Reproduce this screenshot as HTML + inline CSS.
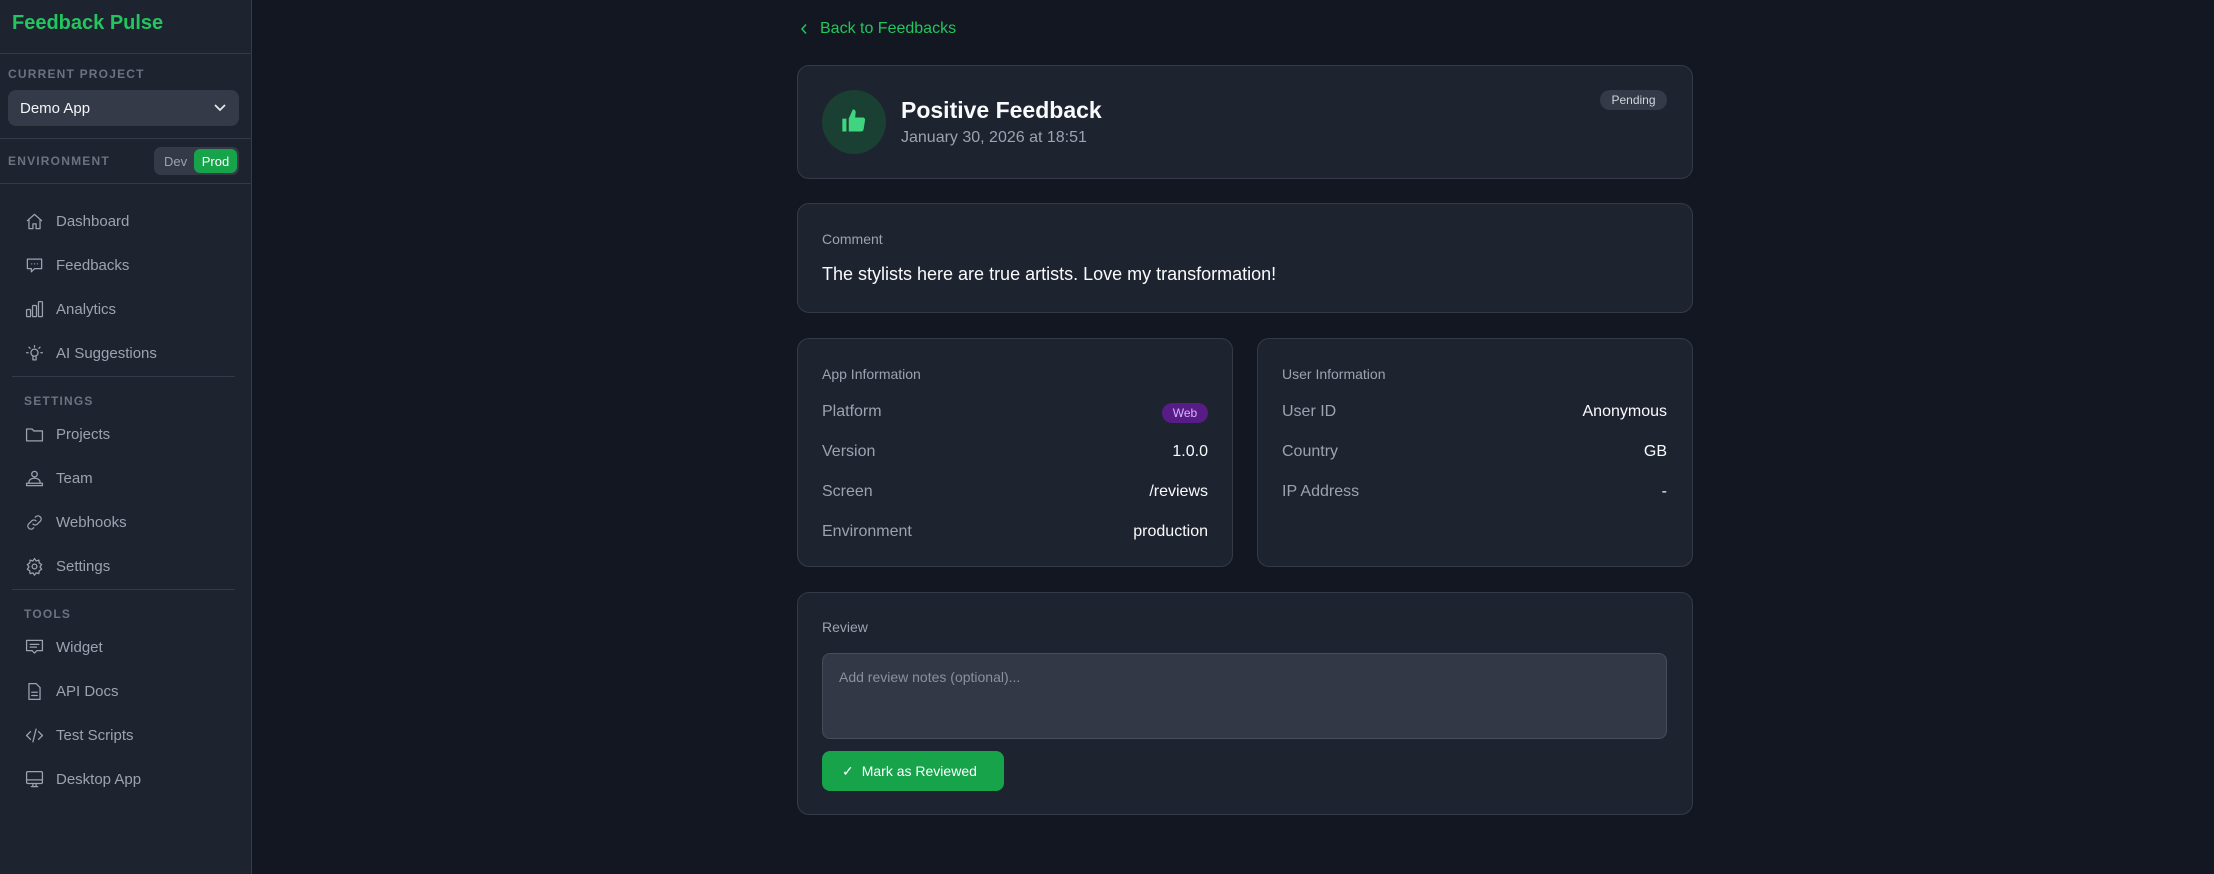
<!DOCTYPE html>
<html><head><meta charset="utf-8"><style>
*{box-sizing:border-box;margin:0;padding:0}
body{width:2214px;height:874px;background:#131721;font-family:"Liberation Sans",sans-serif;position:relative;overflow:hidden;color:#f3f4f6}
.sb{position:absolute;left:0;top:0;width:252px;height:874px;background:#1e2330;border-right:1px solid #343a47}
.abs{position:absolute}
.hr{position:absolute;height:1px;background:#343a47}
.lbl{position:absolute;font-size:12px;letter-spacing:1.2px;color:#6b7280;font-weight:600}
.nav{position:absolute;left:25px;display:flex;align-items:center;font-size:15px;color:#9ca3af;height:20px}
.nav svg{flex-shrink:0;width:19px;height:19px;min-width:19px;margin-right:12px;stroke:#9ca3af;fill:none;stroke-width:1.6;stroke-linecap:round;stroke-linejoin:round}
.card{position:absolute;background:#1e2330;border:1px solid #343a47;border-radius:12px}
.k{position:absolute;font-size:16px;color:#9ca3af}
.v{position:absolute;font-size:16px;color:#f9fafb;text-align:right}
.h{position:absolute;font-size:14px;color:#9ca3af}
</style></head><body>
<div class="sb">
<div class="abs" style="left:12px;top:12px;font-size:20px;font-weight:700;color:#22c55e">Feedback Pulse</div>
<div class="hr" style="left:0;top:53px;width:252px"></div>
<div class="lbl" style="left:8px;top:67px">CURRENT PROJECT</div>
<div class="abs" style="left:8px;top:90px;width:231px;height:36px;background:#343a47;border-radius:8px;font-size:15px;color:#f3f4f6;padding:10px 0 0 12px">Demo App
<svg class="abs" style="right:12px;top:12px" width="14" height="12" viewBox="0 0 14 12"><path d="M2 3l5 5 5-5" stroke="#e5e7eb" stroke-width="1.8" fill="none"/></svg></div>
<div class="hr" style="left:0;top:138px;width:252px"></div>
<div class="lbl" style="left:8px;top:154px">ENVIRONMENT</div>
<div class="abs" style="left:154px;top:147px;width:85px;height:28px;background:#343a47;border-radius:7px"></div>
<div class="abs" style="left:164px;top:154px;font-size:13px;color:#9ca3af">Dev</div>
<div class="abs" style="left:194px;top:149px;width:43px;height:24px;background:#16a34a;border-radius:6px;font-size:13px;color:#fff;text-align:center;line-height:25px">Prod</div>
<div class="hr" style="left:0;top:183px;width:252px"></div>

<div class="nav" style="top:211px"><svg viewBox="0 0 24 24"><path d="M3 11l9-8 9 8M5 9.5V21h5v-6h4v6h5V9.5"/></svg>Dashboard</div>
<div class="nav" style="top:255px"><svg viewBox="0 0 24 24"><path d="M3 4h18v12h-9l-4 4v-4H3z"/><path d="M8.5 10h.01M12 10h.01M15.5 10h.01"/></svg>Feedbacks</div>
<div class="nav" style="top:299px"><svg viewBox="0 0 24 24"><rect x="2" y="12" width="5" height="9" rx="1"/><rect x="9.5" y="7" width="5" height="14" rx="1"/><rect x="17" y="2" width="5" height="19" rx="1"/></svg>Analytics</div>
<div class="nav" style="top:343px"><svg viewBox="0 0 24 24"><circle cx="12" cy="11" r="4.5"/><path d="M10 16v4h4v-4M12 2v2M2 11h2M20 11h2M5 4l1.4 1.4M19 4l-1.4 1.4"/></svg>AI Suggestions</div>
<div class="hr" style="left:12px;top:376px;width:223px"></div>
<div class="lbl" style="left:24px;top:394px">SETTINGS</div>
<div class="nav" style="top:424px"><svg viewBox="0 0 24 24"><path d="M2 5h7l2 2.5h11V20H2z"/></svg>Projects</div>
<div class="nav" style="top:468px"><svg viewBox="0 0 24 24"><circle cx="12" cy="6.5" r="3.5"/><path d="M2 21v-3h20v3zM5 18v-1.5a7 5 0 0114 0V18"/></svg>Team</div>
<div class="nav" style="top:512px"><svg viewBox="0 0 24 24"><path d="M10 14a4 4 0 005.6 0l4-4a4 4 0 00-5.6-5.6l-1 1M14 10a4 4 0 00-5.6 0l-4 4a4 4 0 005.6 5.6l1-1"/></svg>Webhooks</div>
<div class="nav" style="top:556px"><svg viewBox="0 0 24 24"><circle cx="12" cy="12" r="3"/><path d="M12 2l2 3 3.5-1 .5 3.5 3 2-2 3 2 3-3 2-.5 3.5-3.5-1-2 3-2-3-3.5 1-.5-3.5-3-2 2-3-2-3 3-2 .5-3.5 3.5 1z"/></svg>Settings</div>
<div class="hr" style="left:12px;top:589px;width:223px"></div>
<div class="lbl" style="left:24px;top:607px">TOOLS</div>
<div class="nav" style="top:637px"><svg viewBox="0 0 24 24"><path d="M2 3h20v13h-7l-3 3-3-3H2z"/><path d="M6.5 8h11M6.5 11.5h8"/></svg>Widget</div>
<div class="nav" style="top:681px"><svg viewBox="0 0 24 24"><path d="M5 2h9l5 5v15H5z"/><path d="M8.5 13h7M8.5 17h7"/></svg>API Docs</div>
<div class="nav" style="top:725px"><svg viewBox="0 0 24 24"><path d="M7 7l-5 5 5 5M17 7l5 5-5 5M14 4l-4 16"/></svg>Test Scripts</div>
<div class="nav" style="top:769px"><svg viewBox="0 0 24 24"><rect x="2" y="2" width="20" height="15" rx="1.5"/><path d="M2 12.5h20M8 21h8M10 17v4M14 17v4"/></svg>Desktop App</div>
</div>

<svg class="abs" style="left:799px;top:23px" width="10" height="12" viewBox="0 0 10 12"><path d="M7 1.5L3 6l4 4.5" stroke="#22c55e" stroke-width="1.5" fill="none"/></svg>
<div class="abs" style="left:820px;top:20px;font-size:16px;color:#22c55e">Back to Feedbacks</div>

<div class="card" style="left:797px;top:65px;width:896px;height:114px"></div>
<div class="abs" style="left:822px;top:90px;width:64px;height:64px;border-radius:50%;background:#1a3f33"></div>
<svg class="abs" style="left:840px;top:107px" width="28" height="28" viewBox="0 0 24 24"><path fill="#3fd57f" d="M2 10h3.5v11H2zM7.5 10l3.5-8c1.6 0 2.6 1.2 2.4 2.8L13 9h6.5c1.3 0 2.2 1 2 2.2l-1.3 8C20 20.3 19.2 21 18 21H7.5z"/></svg>
<div class="abs" style="left:901px;top:97px;font-size:23px;font-weight:700;color:#f9fafb">Positive Feedback</div>
<div class="abs" style="left:901px;top:129px;font-size:16px;color:#9ca3af">January 30, 2026 at 18:51</div>
<div class="abs" style="left:1600px;top:90px;width:67px;height:20px;border-radius:10px;background:#343a47;font-size:12px;color:#d1d5db;text-align:center;line-height:21px">Pending</div>

<div class="card" style="left:797px;top:203px;width:896px;height:110px"></div>
<div class="h" style="left:822px;top:231px">Comment</div>
<div class="abs" style="left:822px;top:264px;font-size:18px;color:#f9fafb">The stylists here are true artists. Love my transformation!</div>

<div class="card" style="left:797px;top:338px;width:436px;height:229px"></div>
<div class="h" style="left:822px;top:366px">App Information</div>
<div class="k" style="left:822px;top:403px">Platform</div>
<div class="abs" style="left:1162px;top:403px;width:46px;height:20px;border-radius:10px;background:#581c87;color:#d8b4fe;font-size:12px;text-align:center;line-height:21px">Web</div>
<div class="k" style="left:822px;top:443px">Version</div><div class="v" style="right:1006px;top:443px">1.0.0</div>
<div class="k" style="left:822px;top:483px">Screen</div><div class="v" style="right:1006px;top:483px">/reviews</div>
<div class="k" style="left:822px;top:523px">Environment</div><div class="v" style="right:1006px;top:523px">production</div>

<div class="card" style="left:1257px;top:338px;width:436px;height:229px"></div>
<div class="h" style="left:1282px;top:366px">User Information</div>
<div class="k" style="left:1282px;top:403px">User ID</div><div class="v" style="right:547px;top:403px">Anonymous</div>
<div class="k" style="left:1282px;top:443px">Country</div><div class="v" style="right:547px;top:443px">GB</div>
<div class="k" style="left:1282px;top:483px">IP Address</div><div class="v" style="right:547px;top:483px">-</div>

<div class="card" style="left:797px;top:592px;width:896px;height:223px"></div>
<div class="h" style="left:822px;top:619px">Review</div>
<div class="abs" style="left:822px;top:653px;width:845px;height:86px;background:#323846;border:1px solid #454c5a;border-radius:8px;font-size:14px;color:#8b919c;padding:15px 16px">Add review notes (optional)...</div>
<div class="abs" style="left:822px;top:751px;width:182px;height:40px;background:#16a34a;border-radius:8px;font-size:14px;color:#fff;line-height:41px;padding-left:20px"><span style="margin-right:8px">✓</span>Mark as Reviewed</div>
</body></html>
